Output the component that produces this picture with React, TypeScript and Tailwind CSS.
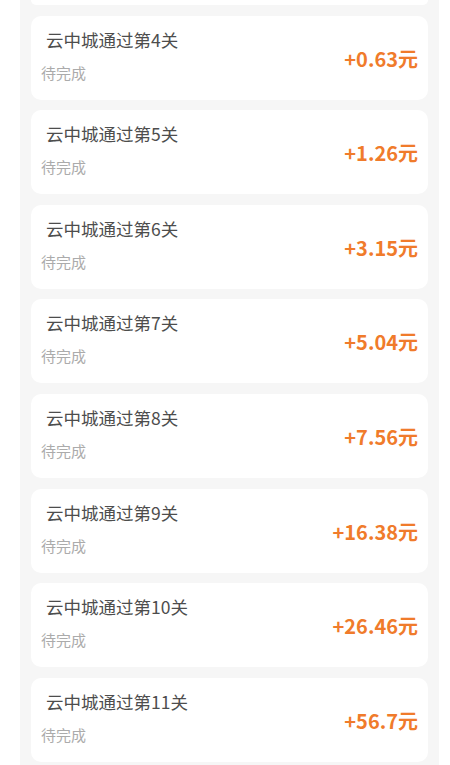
const rows = [
  { level: 4, amount: "+0.63元" },
  { level: 5, amount: "+1.26元" },
  { level: 6, amount: "+3.15元" },
  { level: 7, amount: "+5.04元" },
  { level: 8, amount: "+7.56元" },
  { level: 9, amount: "+16.38元" },
  { level: 10, amount: "+26.46元" },
  { level: 11, amount: "+56.7元" },
];

export default function App() {
  return (
    <div className="w-[450px] h-[765px] overflow-hidden bg-white font-['Noto_Sans_CJK_SC',sans-serif]">
      <div className="ml-[20px] w-[419px] min-h-[800px] bg-[#f6f6f6] px-[11px] flex flex-col gap-[10.6px]">
        {/* bottom edge of the previous card, scrolled off */}
        <div className="h-[5px] shrink-0 bg-white rounded-b-[10px]" />
        {rows.map((row) => (
          <div
            key={row.level}
            className="h-[84px] shrink-0 bg-white rounded-[10px] flex justify-between items-center pl-[10px] pr-[10px]"
          >
            <div className="flex flex-col self-start pt-[12px]">
              <span className="pl-[5px] text-[17.5px] leading-[24px] text-[#4d4d4d]">
                云中城通过第{row.level}关
              </span>
              <span className="mt-[11px] text-[15px] leading-[20px] text-[#ababab]">
                待完成
              </span>
            </div>
            <span className="pt-[2px] text-[20px] font-semibold leading-[26px] text-[#f07b2b]">
              {row.amount}
            </span>
          </div>
        ))}
      </div>
    </div>
  );
}
